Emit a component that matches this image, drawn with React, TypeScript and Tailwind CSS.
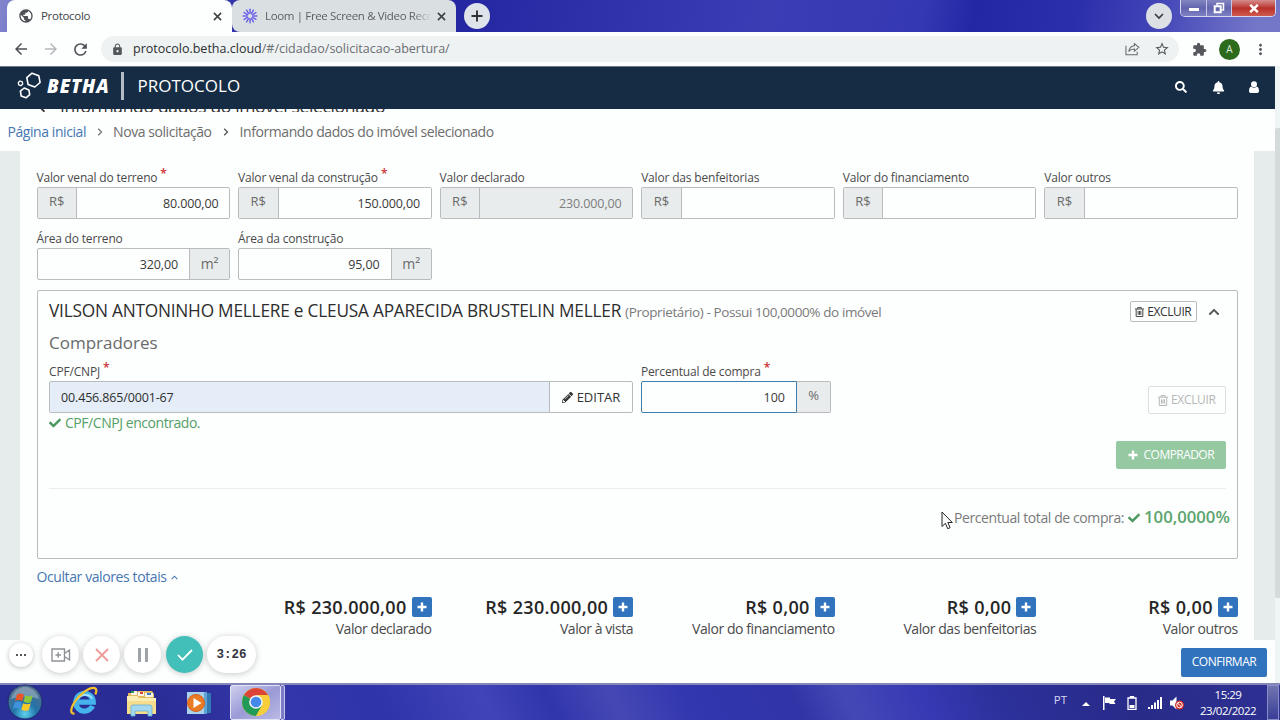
import { useState } from 'react';
import type { ReactNode } from 'react';
import { FaArrowLeft, FaBell, FaCheck, FaPencilAlt, FaSearch, FaChevronUp } from 'react-icons/fa';
import { MdArrowBack, MdArrowForward, MdExtension, MdLock, MdMoreVert, MdPublic, MdRefresh, MdStarBorder } from 'react-icons/md';

interface MoneyField {
  label: string;
  value: string;
  required?: boolean;
  disabled?: boolean;
}

const moneyFields: MoneyField[] = [
  { label: 'Valor venal do terreno', value: '80.000,00', required: true },
  { label: 'Valor venal da construção', value: '150.000,00', required: true },
  { label: 'Valor declarado', value: '230.000,00', disabled: true },
  { label: 'Valor das benfeitorias', value: '' },
  { label: 'Valor do financiamento', value: '' },
  { label: 'Valor outros', value: '' },
];

const areaFields = [
  { label: 'Área do terreno', value: '320,00' },
  { label: 'Área da construção', value: '95,00' },
];

const totals = [
  { label: 'Valor declarado', value: 'R$ 230.000,00' },
  { label: 'Valor à vista', value: 'R$ 230.000,00' },
  { label: 'Valor do financiamento', value: 'R$ 0,00' },
  { label: 'Valor das benfeitorias', value: 'R$ 0,00' },
  { label: 'Valor outros', value: 'R$ 0,00' },
];

function LoomLogo() {
  return (
    <svg viewBox="0 0 16 16" className="w-4 h-4 shrink-0" stroke="#6c63e8" strokeWidth="1.5" strokeLinecap="round">
      {[0, 30, 60, 90, 120, 150, 180, 210, 240, 270, 300, 330].map((a) => (
        <path key={a} d="M8 5.2V1.2" transform={`rotate(${a} 8 8)`} />
      ))}
    </svg>
  );
}

function TabClose() {
  return (
    <svg viewBox="0 0 10 10" className="w-[9px] h-[9px] shrink-0" stroke="#3c4043" strokeWidth="1.7">
      <path d="M1 1l8 8M9 1L1 9" />
    </svg>
  );
}

function Plus({ className }: { className: string }) {
  return (
    <svg viewBox="0 0 10 10" className={className} stroke="currentColor" strokeWidth="2.4">
      <path d="M5 .5v9M.5 5h9" />
    </svg>
  );
}

function Trash({ className }: { className: string }) {
  return (
    <svg viewBox="0 0 10 11" className={className} fill="none" stroke="currentColor" strokeWidth="1">
      <path d="M0 2.200h10M3 2V.6h4V2M1.300 2.500v8h7.400v-8M3.500 4.300v4.400M5 4.300v4.400M6.500 4.300v4.400" />
    </svg>
  );
}

function WindowButtons() {
  return (
    <div className="flex h-[17px] w-[96px] rounded-b-[5px] border border-t-0 border-[#d5d6ef] overflow-hidden">
      <div className="w-[26px] bg-linear-to-b from-[#8385c0] via-[#6265ad] to-[#7f81c4] border-r border-[#c5c6e6] flex items-center justify-center">
        <div className="w-[10px] h-[3px] mt-[3px] bg-white" />
      </div>
      <div className="w-[25px] bg-linear-to-b from-[#8385c0] via-[#6265ad] to-[#7f81c4] border-r border-[#c5c6e6] flex items-center justify-center">
        <svg viewBox="0 0 12 12" className="w-3 h-3" fill="none" stroke="#fff" strokeWidth="1.5">
          <path d="M4 3.5V1.5h6.5V8H8.5" />
          <path d="M1.7 4.3h6v6h-6z" strokeWidth="2" />
        </svg>
      </div>
      <div className="flex-1 bg-linear-to-b from-[#d48c8c] via-[#b92f2b] to-[#cf5a4c] flex items-center justify-center">
        <svg viewBox="0 0 10 9" className="w-[10px] h-[9px]" stroke="#fff" strokeWidth="2.4">
          <path d="M1.2.8l7.6 7.4M8.8.8L1.2 8.2" />
        </svg>
      </div>
    </div>
  );
}

function TabStrip() {
  return (
    <div className="relative flex h-8 shrink-0 bg-[linear-gradient(100deg,#8385cd_0,#3a3cae_8%,#2527a2_36%,#3a3db4_60%,#3438b2_72%,#2327a4_76%,#2c2fab_84%,#4044b6_90%,#7476c8_98%)]">
      <div className="flex items-center ml-[7px] w-[225px] h-8 rounded-t-lg bg-[#fdfefe] pl-[11px] pr-[10px]">
        <MdPublic className="w-4 h-4 text-[#4d5156]" />
        <span className="ml-[7px] flex-1 text-[11.5px] tracking-[-0.3px] text-[#3f4347]">Protocolo</span>
        <TabClose />
      </div>
      <div className="flex items-center w-[224px] h-8 rounded-t-lg rounded-bl-lg bg-[#dadfe2] pl-[10px] pr-[10px]">
        <LoomLogo />
        <span className="ml-[7px] flex-1 min-w-0 overflow-hidden whitespace-nowrap text-[11.5px] tracking-[-0.35px] text-[#5b5f63] mask-r-from-88%">
          Loom | Free Screen &amp; Video Recorder
        </span>
        <div className="ml-[5px] flex">
          <TabClose />
        </div>
      </div>
      <div className="ml-2 mt-[3px] flex h-[26px] w-[26px] items-center justify-center rounded-full bg-[#dfe3ea]">
        <svg viewBox="0 0 12 12" className="w-3 h-3" stroke="#2f3236" strokeWidth="1.9">
          <path d="M6 .5v11M.5 6h11" />
        </svg>
      </div>
      <div className="ml-auto mt-[3px] mr-[8px] flex h-[26px] w-[26px] items-center justify-center rounded-full bg-[#dcdfe4]">
        <svg viewBox="0 0 10 10" className="w-[10px] h-[10px]" fill="none" stroke="#3a3d42" strokeWidth="1.7">
          <path d="M1 3l4 4 4-4" />
        </svg>
      </div>
      <div className="mr-[4px]">
        <WindowButtons />
      </div>
    </div>
  );
}

function AddressBar() {
  return (
    <div className="flex h-[34px] shrink-0 items-center bg-[#fdfefe] pl-[12px] pr-[11px]">
      <MdArrowBack className="w-[18px] h-[18px] text-[#4c5054]" />
      <MdArrowForward className="ml-[12px] w-[18px] h-[18px] text-[#b5b8bb]" />
      <MdRefresh className="ml-[11px] w-[19px] h-[19px] text-[#4c5054]" />
      <div className="ml-[11px] flex h-[26px] w-[1078px] items-center rounded-full bg-[#eff2f2] pl-[10px] pr-[9px]">
        <MdLock className="w-[13px] h-[13px] text-[#54585c]" />
        <span className="ml-[9px] text-[12.5px] text-[#6a6e72]">
          <span className="text-[#2b2e31]">protocolo.betha.cloud</span>/#/cidadao/solicitacao-abertura/
        </span>
        <svg viewBox="0 0 16 14" className="ml-auto w-[15px] h-[14px]" fill="none" stroke="#64686c" strokeWidth="1.1">
          <path d="M1 3.5v9.7h12V10" />
          <path d="M10 1.2l4.8 4-4.8 4V6.9C7.300 6.900 5.500 7.700 4 9.700 4.500 6.500 6.200 3.900 10 3.500z" />
        </svg>
        <MdStarBorder className="ml-[14px] w-4 h-4 text-[#54585c]" />
      </div>
      <MdExtension className="ml-auto w-[15px] h-[15px] text-[#54585c]" />
      <div className="ml-[12px] flex h-[21px] w-[21px] items-center justify-center rounded-full bg-[#2c6a1c] text-[10px] text-[#dfeadb]">
        A
      </div>
      <MdMoreVert className="ml-[12px] w-[17px] h-[17px] text-[#54585c]" />
    </div>
  );
}

function AppHeader() {
  return (
    <header className="flex h-[43px] shrink-0 items-center border-t border-[#6d7b88] bg-[#152c44] pl-[16px] pr-[16px] pb-[4px] text-white">
      <svg viewBox="0 0 26 28" className="w-[26px] h-7 shrink-0" fill="none" stroke="#fff" strokeWidth="1.6" strokeLinejoin="round">
        <path d="M16 1.200l6.800 2.600 1.300 6.700-5.300 4.500-6.700-2.500-1.300-6.800z" />
        <path d="M8.200 16l4.700 1.900.8 4.700-3.700 3.200-4.800-1.800-.8-4.800z" />
        <path d="M4 9l2.300.9.400 2.200-1.700 1.600-2.300-.9-.4-2.300z" strokeWidth="1.300" />
      </svg>
      <span className="ml-[5px] text-[18.5px] leading-6 font-extrabold italic tracking-[0.9px]">BETHA</span>
      <div className="ml-[11px] h-7 w-[3px] bg-[#b3bcc5]" />
      <span className="ml-[14px] text-[17px] leading-6">PROTOCOLO</span>
      <div className="ml-auto flex items-center pt-[2px]">
        <FaSearch className="w-[12px] h-[12px]" />
        <FaBell className="ml-[25px] w-[13px] h-[13px]" />
        <svg viewBox="0 0 10 12" className="ml-[24px] w-[10px] h-[12px]" fill="#fff">
          <circle cx="5" cy="3.200" r="3" />
          <path d="M2.400 5.400C1 5.600 0 7.200 0 10c0 1.200.7 2 1.800 2h6.400c1.100 0 1.800-.8 1.800-2 0-2.800-1-4.400-2.400-4.600a3.600 3.600 0 0 1-5.200 0z" />
        </svg>
      </div>
    </header>
  );
}

function Label({ children, required }: { children: ReactNode; required?: boolean }) {
  return (
    <label className="flex h-5 items-center whitespace-nowrap pt-[2px] text-[12px] tracking-[-0.18px] text-[#4a4a4a]">
      {children}
      {required && <span className="ml-[3px] -mt-2 text-[12px] font-semibold text-[#cc2f2f]">*</span>}
    </label>
  );
}

function Addon({ children, className }: { children: ReactNode; className: string }) {
  return (
    <span className={`flex shrink-0 items-center justify-center bg-[#e8ecec] pb-[2px] text-[#6b6b6b] border-[#b9bcbf] ${className}`}>
      {children}
    </span>
  );
}

function MoneyInput({ field }: { field: MoneyField }) {
  return (
    <div>
      <Label required={field.required}>{field.label}</Label>
      <div className="flex h-8 overflow-hidden rounded-[2px] border border-[#b9bcbf]">
        <Addon className="w-[39.5px] border-r text-[13px]">R$</Addon>
        <div
          className={`flex flex-1 items-center justify-end pr-[10.5px] pt-[2px] text-[12.5px] tracking-[-0.1px] ${
            field.disabled ? 'bg-[#e8ecec] text-[#7d7d7d]' : 'bg-[#fdfefe] text-[#3a3a3a]'
          }`}
        >
          {field.value}
        </div>
      </div>
    </div>
  );
}

function Breadcrumb() {
  return (
    <nav className="flex h-[39px] shrink-0 items-center bg-[#fdfefe] pl-[7.5px] pb-px text-[14px] tracking-[-0.43px] text-[#6d6d6d]">
      <a className="text-[#4676b2]">Página inicial</a>
      <svg viewBox="0 0 6 8" className="ml-[11px] mr-[10px] mt-px w-[6px] h-2" fill="none" stroke="#777" strokeWidth="1.300">
        <path d="M1.200.8L4.500 4 1.200 7.200" />
      </svg>
      <span>Nova solicitação</span>
      <svg viewBox="0 0 6 8" className="ml-[11px] mr-[11px] mt-px w-[6px] h-2" fill="none" stroke="#555" strokeWidth="1.300">
        <path d="M1.200.8L4.500 4 1.200 7.200" />
      </svg>
      <span>Informando dados do imóvel selecionado</span>
    </nav>
  );
}

function OwnerCard() {
  const [document, setDocument] = useState('00.456.865/0001-67');
  const [percent, setPercent] = useState('100');

  return (
    <section className="relative mt-[10px] h-[269px] rounded-[2px] border border-[#b9bcbf] pl-[11.5px] pr-[11px]">
      <div className="flex h-[41px] items-center whitespace-nowrap">
        <span className="-mt-px text-[17.250px] tracking-[-0.21px] text-[#2d2d2d]">VILSON ANTONINHO MELLERE e CLEUSA APARECIDA BRUSTELIN MELLER</span>
        <span className="ml-1 mt-[2px] text-[13.500px] tracking-[-0.4px] text-[#7a7a7a]">(Proprietário) - Possui 100,0000% do imóvel</span>
        <button className="ml-auto flex h-[21px] w-[67px] items-center justify-center rounded-[2px] border border-[#b9bcbf] text-[12px] tracking-[-0.4px] text-[#333]">
          <Trash className="mr-[3px] w-[9px] h-[10px]" />
          EXCLUIR
        </button>
        <FaChevronUp className="ml-[11px] mr-[6px] w-3 h-3 text-[#555]" />
      </div>
      <h3 className="h-[22px] text-[17px] leading-[22px] text-[#6a6a6a]">Compradores</h3>
      <div className="mt-[7px] flex items-end">
        <div className="w-[584px]">
          <Label required>CPF/CNPJ</Label>
          <div className="flex h-8 overflow-hidden rounded-[2px] border border-[#b9bcbf]">
            <input
              value={document}
              onChange={(e) => setDocument(e.target.value)}
              className="min-w-0 flex-1 bg-[#e5edf9] pl-[11px] pt-[2px] text-[12.500px] tracking-[-0.15px] text-[#2d2d2d] outline-none"
            />
            <button className="flex w-[83px] items-center justify-center border-l border-[#b9bcbf] pt-px text-[13px] text-[#333]">
              <FaPencilAlt className="mr-[4px] w-[11px] h-[11px]" />
              EDITAR
            </button>
          </div>
        </div>
        <div className="ml-2 w-[190px]">
          <Label required>Percentual de compra</Label>
          <div className="flex h-8">
            <input
              value={percent}
              onChange={(e) => setPercent(e.target.value)}
              className="w-[156px] rounded-l-[2px] border border-[#3f7fae] pr-[11px] pt-[2px] text-right text-[12.500px] text-[#3a3a3a] outline-none"
            />
            <Addon className="w-[34px] rounded-r-[2px] border border-l-0 text-[13px]">%</Addon>
          </div>
        </div>
        <button className="ml-auto -mb-px flex h-[28px] w-[78px] items-center justify-center rounded-[2px] border border-[#dcdfe0] text-[12px] tracking-[-0.3px] text-[#b5b8b8]">
          <Trash className="mr-[3px] w-[10px] h-[11px]" />
          EXCLUIR
        </button>
      </div>
      <p className="flex h-[19px] items-center text-[14px] tracking-[-0.45px] text-[#559f68]">
        <FaCheck className="mr-[4px] w-3 h-3 text-[#4a9a5f]" />
        CPF/CNPJ encontrado.
      </p>
      <div className="mt-[9px] flex justify-end">
        <button className="flex h-[28px] w-[110px] items-center justify-center rounded-[2px] bg-[#94c9a2] text-[12px] tracking-[-0.55px] text-white">
          <Plus className="mr-[6px] w-[10px] h-[10px]" />
          COMPRADOR
        </button>
      </div>
      <div className="mt-[19px] border-t border-[#eceeee]" />
      <div className="-mr-[4px] mt-[16px] flex h-6 items-center justify-end">
        <span className="mt-px text-[14px] tracking-[-0.4px] text-[#7a7a7a]">Percentual total de compra:</span>
        <FaCheck className="ml-[4px] mt-px w-3 h-3 text-[#4a9a5f]" />
        <span className="ml-[4px] -mt-px text-[16.700px] font-semibold text-[#5aa56d]">100,0000%</span>
      </div>
      {/* mouse pointer */}
      <svg viewBox="0 0 12 19" className="absolute left-[903px] top-[220px] w-3 h-[19px]" fill="#fff" stroke="#222" strokeWidth="1">
        <path d="M1 1v14.500l3.400-3.200 2.300 5.400 2.400-1-2.300-5.200h4.500z" />
      </svg>
    </section>
  );
}

function LoomControls() {
  return (
    <div className="absolute left-[9px] top-[636px] flex h-[37px] items-center">
      <div className="flex h-6 w-6 items-center justify-center gap-[2px] rounded-full bg-white shadow-[0_1px_5px_rgba(0,0,0,0.25)]">
        <i className="w-[2px] h-[2px] bg-[#555]" />
        <i className="w-[2px] h-[2px] bg-[#555]" />
        <i className="w-[2px] h-[2px] bg-[#555]" />
      </div>
      <div className="ml-[9px] flex h-[37px] w-[37px] items-center justify-center rounded-full bg-white shadow-[0_1px_6px_rgba(0,0,0,0.22)]">
        <svg viewBox="0 0 20 14" className="w-5 h-[14px]" fill="none" stroke="#8e9196" strokeWidth="1.400">
          <path d="M1 1h12.500v12H1zM13.500 5.500l5-3.500v10l-5-3.500M7.200 4.300v5.400M4.500 7h5.400" />
        </svg>
      </div>
      <div className="ml-[4px] flex h-[37px] w-[37px] items-center justify-center rounded-full bg-white shadow-[0_1px_6px_rgba(0,0,0,0.22)]">
        <svg viewBox="0 0 14 14" className="w-[14px] h-[14px]" stroke="#ee9b98" strokeWidth="1.800">
          <path d="M1 1l12 12M13 1L1 13" />
        </svg>
      </div>
      <div className="ml-[4px] flex h-[37px] w-[37px] items-center justify-center gap-[4px] rounded-full bg-white shadow-[0_1px_6px_rgba(0,0,0,0.22)]">
        <i className="w-[3px] h-[14px] bg-[#9fa2a6]" />
        <i className="w-[3px] h-[14px] bg-[#9fa2a6]" />
      </div>
      <div className="ml-[5px] flex h-[37px] w-[37px] items-center justify-center rounded-full bg-[#42bfb9] shadow-[0_1px_6px_rgba(0,0,0,0.22)]">
        <svg viewBox="0 0 16 12" className="w-4 h-3" fill="none" stroke="#fff" strokeWidth="1.800">
          <path d="M1 6l4.500 4.700L15 1" />
        </svg>
      </div>
      <div className="ml-[4px] flex h-[37px] w-[49px] items-center justify-center rounded-full bg-white pt-[2px] font-['Liberation_Mono',monospace] text-[12.500px] font-bold text-[#33343f] shadow-[0_1px_6px_rgba(0,0,0,0.22)]">
        3:26
      </div>
    </div>
  );
}

function StartOrb() {
  return (
    <svg viewBox="0 0 36 36" className="w-9 h-9">
      <defs>
        <radialGradient id="orb" cx="50%" cy="85%" r="75%">
          <stop offset="0" stopColor="#5fd3ee" />
          <stop offset="0.45" stopColor="#2272a8" />
          <stop offset="1" stopColor="#52708f" />
        </radialGradient>
      </defs>
      <circle cx="18" cy="18" r="17" fill="url(#orb)" stroke="#1b2f6b" />
      <path d="M4 15C7 5 14 3 18 3s11 2 14 12c-9-3-19-3-28 0z" fill="#fff" opacity=".28" />
      <path d="M10 10.500c2.500-1.500 5-1.300 7 .2l-1.700 6.600c-2.200-1.500-4.700-1.700-7.300-.3z" fill="#e8572a" />
      <path d="M18.200 11.300c2.400 1.400 4.800 1.300 7.600 0L24 18c-2.600 1.300-5 1.200-7.500-.2z" fill="#8cc63e" />
      <path d="M7.700 18.300c2.600-1.300 5-1.200 7.200.3l-1.800 6.600c-2.100-1.500-4.500-1.500-7.200-.2z" fill="#3f93dd" />
      <path d="M16.100 19.200c2.500 1.400 4.900 1.400 7.600.1l-1.900 6.600c-2.500 1.300-5 1.200-7.500-.2z" fill="#fbc928" />
    </svg>
  );
}

function ExplorerE() {
  return (
    <svg viewBox="0 0 30 30" className="w-[30px] h-[30px]" fill="none">
      <path d="M23.500 20A8.800 8.800 0 1 1 24.300 16.200H9" stroke="#45b4ee" strokeWidth="5.200" />
      <path d="M23 12.500C21 8 12 7 9 13" stroke="#a9e6fb" strokeWidth="1.800" />
      <path d="M5.500 27.500C1.500 28 1 24 5 17 10 8.500 20 1 25.500 2c2.500.5 2.200 3.800.8 6.500" stroke="#f3c02c" strokeWidth="2.300" />
    </svg>
  );
}

function FolderIcon() {
  return (
    <svg viewBox="0 0 32 28" className="w-8 h-7">
      <path d="M2 4h8l2-2h14l2 3v19H2z" fill="#e2bc5c" />
      <path d="M5 2h6v4H5zM12 3h6v4h-6zM19 4h8v4h-8z" fill="#f7f5ea" />
      <path d="M5 2h3v2H5z" fill="#2f9b4a" />
      <path d="M14 3h3v2h-3z" fill="#d5442d" />
      <path d="M21 4h4v2h-4z" fill="#3779c9" />
      <path d="M1 7h10l2 2h17v16H1z" fill="#f6dd8c" />
      <path d="M1 7h10l2 2h17v3H1z" fill="#fbeeb4" />
      <path d="M5 27v-9q0-2 2-2h17q2 0 2 2v9h-4v-5H9v5z" fill="#a2d8f0" stroke="#64aed2" strokeWidth=".8" />
    </svg>
  );
}

function MediaPlayerIcon() {
  return (
    <svg viewBox="0 0 26 24" className="w-[26px] h-6">
      <path d="M8 2h17v20H8z" fill="#3579b4" />
      <path d="M5 1h16v22H5z" fill="#5ea4d4" />
      <path d="M1 1h17v22H1z" fill="#a9d2ec" />
      <circle cx="10" cy="12" r="8.500" fill="#ea7b25" stroke="#d8601a" />
      <path d="M7.500 7l8 5-8 5z" fill="#fff" />
    </svg>
  );
}

function ChromeIcon() {
  return (
    <svg viewBox="0 0 28 28" className="w-7 h-7">
      <circle cx="14" cy="14" r="14" fill="#f9ce3b" />
      <path d="M14 14L1.900 7A14 14 0 0 1 26.100 7z" fill="#dc4437" />
      <path d="M1.900 7A14 14 0 0 0 14 28l6-10.500-6-3.500z" fill="#219b57" />
      <path d="M14 28a14 14 0 0 0 12.100-21H14l6 10.500z" fill="#f9ce3b" />
      <circle cx="14" cy="14" r="6.800" fill="#f4f5f5" />
      <circle cx="14" cy="14" r="5.300" fill="#4488ea" />
    </svg>
  );
}

function Taskbar() {
  return (
    <footer className="flex h-[37px] shrink-0 items-center border-t-2 border-[#8587b8] bg-[linear-gradient(65deg,#2a2e97_0,#292c94_12%,#3336a8_22%,#2f34ab_30%,#4044b6_38%,#3035ac_43%,#4548b4_48%,#3236af_54%,#3034a6_62%,#4448b6_66%,#3639b3_72%,#2c309a_78%,#282b88_88%,#2e3192_100%)] text-white">
      <div className="ml-[7px] -mt-[2px]">
        <StartOrb />
      </div>
      <div className="ml-[26px] -mt-[3px]">
        <ExplorerE />
      </div>
      <div className="ml-[27px]">
        <FolderIcon />
      </div>
      <div className="ml-[28px]">
        <MediaPlayerIcon />
      </div>
      <div className="ml-[18px] flex h-full w-[51px] items-center justify-center rounded-[2px] border border-[#e2e2f6] bg-linear-to-br from-[#cfcfee] via-[#9a9bd6] to-[#b9b9e4] pb-[2px]">
        <ChromeIcon />
      </div>
      <div className="h-full w-[4px] rounded-r-[2px] border border-l-0 border-[#c5c6ea] bg-[#7c7dc6]" />
      <span className="ml-auto mb-[6px] text-[11.500px] text-[#d5d8f0]">PT</span>
      <svg viewBox="0 0 8 4" className="ml-[15px] mt-[2px] w-2 h-1" fill="#fff">
        <path d="M0 4l4-4 4 4z" />
      </svg>
      <svg viewBox="0 0 14 14" className="ml-[12px] w-[14px] h-[14px]" fill="#fff">
        <path d="M1 0h1.500v14H1zM3 1.500h5V3h6l-2 2.500L13.500 8H7.500V7H3z" />
      </svg>
      <svg viewBox="0 0 10 14" className="ml-[11px] w-[10px] h-[14px]" fill="none" stroke="#fff" strokeWidth="1.300">
        <path d="M3.500 2V.7h3V2M1 2h8v11.300H1z" />
        <path d="M2.500 9h5v3h-5z" fill="#fff" stroke="none" />
      </svg>
      <svg viewBox="0 0 14 12" className="ml-[11px] w-[14px] h-3" fill="#fff">
        <path d="M0 10h2v2H0zM3 8h2v4H3zM6 5.500h2V12H6zM9 3h2v9H9zM12 0h2v12h-2z" />
      </svg>
      <svg viewBox="0 0 14 14" className="ml-[8px] w-[14px] h-[14px]">
        <path d="M0 4.500h2.500L6.500.5v13l-4-4H0z" fill="#fff" />
        <circle cx="9.500" cy="9" r="4.500" fill="#d3302c" />
        <circle cx="9.500" cy="9" r="2.800" fill="none" stroke="#fff" />
        <path d="M7.500 7l4 4" stroke="#fff" />
      </svg>
      <div className="ml-[16px] w-[56px] text-center text-[11.500px] leading-4 tracking-[-0.5px]">
        <div>15:29</div>
        <div>23/02/2022</div>
      </div>
      <div className="ml-[11px] mr-[1px] h-full w-3 border border-[#8a8cc4] bg-linear-to-b from-[#7274b0] to-[#3a3d97]" />
    </footer>
  );
}

export default function App() {
  return (
    <div className="relative flex h-[720px] w-[1280px] flex-col overflow-hidden bg-[#fdfefe] font-['Open_Sans','Noto_Sans',sans-serif]">
      <TabStrip />
      <AddressBar />
      <div className="flex min-h-0 flex-1">
        <div className="flex w-[1275px] flex-col">
          <AppHeader />
          {/* page title scrolled under the header */}
          <div className="flex h-[3px] shrink-0 items-end overflow-hidden pl-[38px]">
            <FaArrowLeft className="-mb-px w-3 h-3 shrink-0 text-[#333]" />
            <span className="ml-[10px] -mb-[4px] whitespace-nowrap text-[17.500px] leading-5 tracking-[-0.34px] text-[#333]">Informando dados do imóvel selecionado</span>
          </div>
          <Breadcrumb />
          <main className="flex h-[489px] shrink-0 bg-[#e6ebeb] pl-5 pr-[21px]">
            <div className="flex-1 bg-[#fdfefe] pl-[16.5px] pr-[16.2px] pt-[16px]">
              <div className="grid grid-cols-6 gap-x-2">
                {moneyFields.map((field) => (
                  <MoneyInput key={field.label} field={field} />
                ))}
              </div>
              <div className="mt-[9px] grid grid-cols-6 gap-x-2">
                {areaFields.map((field) => (
                  <div key={field.label}>
                    <Label>{field.label}</Label>
                    <div className="flex h-8 overflow-hidden rounded-[2px] border border-[#b9bcbf]">
                      <div className="flex flex-1 items-center justify-end pr-[11px] pt-[2px] text-[12.500px] tracking-[-0.1px] text-[#3a3a3a]">
                        {field.value}
                      </div>
                      <Addon className="w-10 border-l text-[14px]">m²</Addon>
                    </div>
                  </div>
                ))}
              </div>
              <OwnerCard />
              <a className="mt-[7px] flex h-5 items-center text-[14px] tracking-[-0.4px] text-[#4676b2]">
                Ocultar valores totais
                <svg viewBox="0 0 8 5" className="ml-[4px] mt-[3px] w-[7px] h-[5px]" fill="none" stroke="#4676b2" strokeWidth="1.200">
                  <path d="M.8 4.300L4 1l3.200 3.300" />
                </svg>
              </a>
              <div className="mt-[9px] grid grid-cols-6 gap-x-2">
                {totals.map((t, i) => (
                  <div key={t.label} className={`flex flex-col items-end ${i === 0 ? 'col-start-2' : ''}`}>
                    <div className="flex h-[24px] items-center whitespace-nowrap text-[18px] font-semibold tracking-[0.33px] text-[#262626]">
                      {t.value}
                      <button className="ml-[5px] flex h-5 w-5 items-center justify-center rounded-[2px] bg-[#3173bd] text-white">
                        <Plus className="w-[10px] h-[10px]" />
                      </button>
                    </div>
                    <div className="h-5 text-[14px] leading-5 tracking-[-0.43px] text-[#4a4a4a]">{t.label}</div>
                  </div>
                ))}
              </div>
            </div>
          </main>
          <div className="flex flex-1 items-start justify-end pt-[8px] pr-[8px]">
            <button className="h-[29px] w-[86px] rounded-[2px] bg-[#3173bd] pb-px text-[12px] tracking-[-0.45px] text-white">CONFIRMAR</button>
          </div>
        </div>
        {/* scrollbar */}
        <div className="flex-1 bg-[#eff4f4] pt-[62px]">
          <div className="h-[470px] rounded-l-[2px] bg-[#d5dada]" />
        </div>
      </div>
      <Taskbar />
      <LoomControls />
    </div>
  );
}
